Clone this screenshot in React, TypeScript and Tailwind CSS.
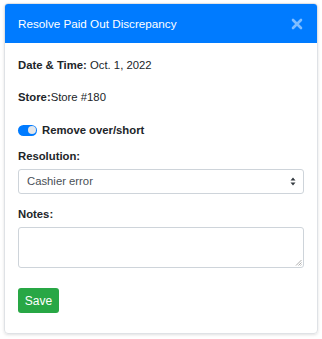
import React from "react";

export default function App() {
  return (
    <div className="w-[322px] h-[339px] bg-white pt-[3px] pl-[4px]" style={{ fontFamily: "'Liberation Sans', Arial, sans-serif" }}>
      <div className="w-[314px] h-[331px] rounded-[4px] border border-[#dfe2e6] shadow-[0_1px_3px_rgba(0,0,0,0.12)] overflow-hidden flex flex-col text-[#212529]">
        <div className="h-[39px] bg-[#007bff] flex items-center justify-between pl-[13px] pr-[13px]">
          <span className="text-white text-[11.7px] leading-none">Resolve Paid Out Discrepancy</span>
          <svg width="12" height="12" viewBox="0 0 12 12" className="mr-[1px]">
            <path d="M2 2 L10 10 M10 2 L2 10" stroke="#80bdff" strokeWidth="2.6" strokeLinecap="round" />
          </svg>
        </div>
        <div className="flex flex-col px-[13px] pt-[12px] pb-[20px] text-[11.3px]">
          <div className="h-[20px] flex items-center">
            <span className="font-bold">Date &amp; Time:</span>
            <span>&nbsp;Oct. 1, 2022</span>
          </div>
          <div className="h-[20px] flex items-center mt-[12px]">
            <span className="font-bold">Store:</span>
            <span>Store #180</span>
          </div>
          <div className="h-[20px] flex items-center mt-[13px]">
            <div className="w-[19px] h-[11px] rounded-full bg-[#007bff] flex items-center justify-end pr-[1.5px]">
              <div className="w-[8px] h-[8px] rounded-full bg-[#e3e6ea]" />
            </div>
            <span className="font-bold ml-[5px]">Remove over/short</span>
          </div>
          <div className="h-[20px] flex items-center mt-[6px] font-bold">Resolution:</div>
          <div className="mt-[3px] h-[25px] w-full border border-[#ced4da] rounded-[3px] flex items-center justify-between pl-[8px] pr-[7px]">
            <span className="text-[#495057]">Cashier error</span>
            <svg width="6" height="9" viewBox="0 0 6 9">
              <path d="M3 0.5 L5.5 3.5 L0.5 3.5 Z M3 8.5 L5.5 5.5 L0.5 5.5 Z" fill="#343a40" />
            </svg>
          </div>
          <div className="h-[20px] flex items-center mt-[10px] font-bold">Notes:</div>
          <div className="relative mt-[3px] h-[41px] w-full border border-[#ced4da] rounded-[3px]">
            <svg width="7" height="7" viewBox="0 0 7 7" className="absolute right-[1px] bottom-[1px]">
              <path d="M6.5 1 L1 6.5 M6.5 3.5 L3.5 6.5 M6.5 5.5 L5.5 6.5" stroke="#9a9a9a" strokeWidth="0.8" />
            </svg>
          </div>
          <div className="mt-[20px]">
            <div className="h-[25px] w-[41px] bg-[#28a745] rounded-[3px] text-white text-[12px] flex items-center justify-center">Save</div>
          </div>
        </div>
      </div>
    </div>
  );
}
